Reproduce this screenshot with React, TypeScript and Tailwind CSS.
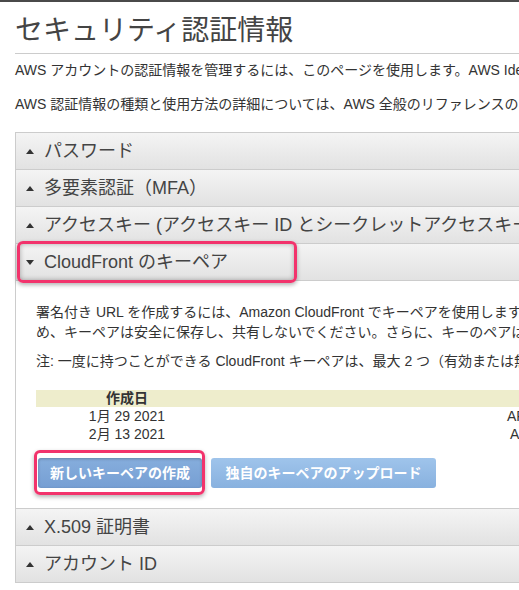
const font = "font-['Liberation_Sans','Noto_Sans_CJK_JP',sans-serif]";

const Caret = ({ open }: { open?: boolean }) => (
  <svg width="8" height="5" viewBox="0 0 8 5" className="shrink-0">
    {open ? <polygon points="0,0 8,0 4,5" fill="#333" /> : <polygon points="0,5 8,5 4,0" fill="#333" />}
  </svg>
);

const Row = ({ title, open }: { title: string; open?: boolean }) => (
  <div className="h-[37px] border-t border-[#cccccc] bg-linear-to-b from-[#f4f4f4] to-[#e2e2e2] flex items-center gap-[10px] pl-[10px] whitespace-nowrap">
    <Caret open={open} />
    <span className="text-[18px] text-[#444]">{title}</span>
  </div>
);

const keys = [
  { date: "1月 29 2021", id: "APKAJ3XXXXXXXXXXXXXX", pad: "pl-[289px]" },
  { date: "2月 13 2021", id: "APKAIXXXXXXXXXXXXXXX", pad: "pl-[292px]" },
];

export default function App() {
  return (
    <div className={`relative w-[519px] h-[590px] overflow-hidden bg-white text-[#333] ${font}`}>
      <div className="h-[2px] bg-[#4a4a4a]" />
      <div className="w-[900px] pl-[15px]">
        <h1 className="pt-[12px] pb-[5px] text-[28px] leading-[34px] text-[#444] border-b border-[#cccccc]">
          セキュリティ認証情報
        </h1>
        <p className="mt-[6px] text-[14px] leading-[20px] whitespace-nowrap">
          AWS アカウントの認証情報を管理するには、このページを使用します。AWS Identity and Access Management (IAM) ユーザーの認証情報を管理するには、IAM コンソールを使用してください。
        </p>
        <p className="mt-[14px] text-[14px] leading-[20px] whitespace-nowrap">
          AWS 認証情報の種類と使用方法の詳細については、AWS 全般のリファレンスの AWS セキュリティ認証情報を参照してください。
        </p>

        <div className="mt-[18px] border-l border-b border-[#cccccc]">
          <Row title="パスワード" />
          <Row title="多要素認証（MFA）" />
          <Row title="アクセスキー (アクセスキー ID とシークレットアクセスキー)" />
          <Row title="CloudFront のキーペア" open />

          <div className="border-t border-[#cccccc] bg-white pl-[20px] pt-[21px] pb-[20px] text-[14px] leading-[20px]">
            <p className="whitespace-nowrap">
              署名付き URL を作成するには、Amazon CloudFront でキーペアを使用します。キーペアは AWS アカウントへのアクセスに使用されるた
            </p>
            <p className="whitespace-nowrap">
              め、キーペアは安全に保存し、共有しないでください。さらに、キーのペアは定期的に更新することをお勧めします。
            </p>
            <p className="mt-[9px] whitespace-nowrap">
              注: 一度に持つことができる CloudFront キーペアは、最大 2 つ（有効または無効）です。
            </p>

            <div className="mt-[19px] text-[14px]">
              <div className="h-[17px] leading-[17px] bg-[#eeedcc] flex">
                <div className="w-[182px] text-center font-bold">作成日</div>
              </div>
              {keys.map((k) => (
                <div key={k.date} className="h-[18px] leading-[18px] flex whitespace-nowrap">
                  <div className="w-[182px] text-center">{k.date}</div>
                  <div className={k.pad}>{k.id}</div>
                </div>
              ))}
            </div>

            <div className="mt-[15px] flex gap-[9px] ml-[2px]">
              <button className="h-[30px] w-[164px] rounded-[3px] bg-linear-to-b from-[#86aedd] to-[#769fd3] shadow-[inset_0_1px_3px_rgba(0,0,0,0.25)] text-white font-bold text-[14px]">
                新しいキーペアの作成
              </button>
              <button className="h-[30px] w-[225px] rounded-[3px] bg-linear-to-b from-[#9fc4eb] to-[#88b1df] text-white font-bold text-[14px]">
                独自のキーペアのアップロード
              </button>
            </div>
          </div>

          <Row title="X.509 証明書" />
          <Row title="アカウント ID" />
        </div>
      </div>

      <div className="absolute left-[17px] top-[241px] w-[280px] h-[42px] rounded-[6px] border-[3px] border-[#f2336c] shadow-[inset_0_0_5px_rgba(0,0,0,0.3),0_2px_4px_rgba(0,0,0,0.3)]" />
      <div className="absolute left-[34px] top-[450px] w-[171px] h-[45px] rounded-[6px] border-[3px] border-[#f2336c] shadow-[0_2px_4px_rgba(0,0,0,0.3)]" />
    </div>
  );
}
